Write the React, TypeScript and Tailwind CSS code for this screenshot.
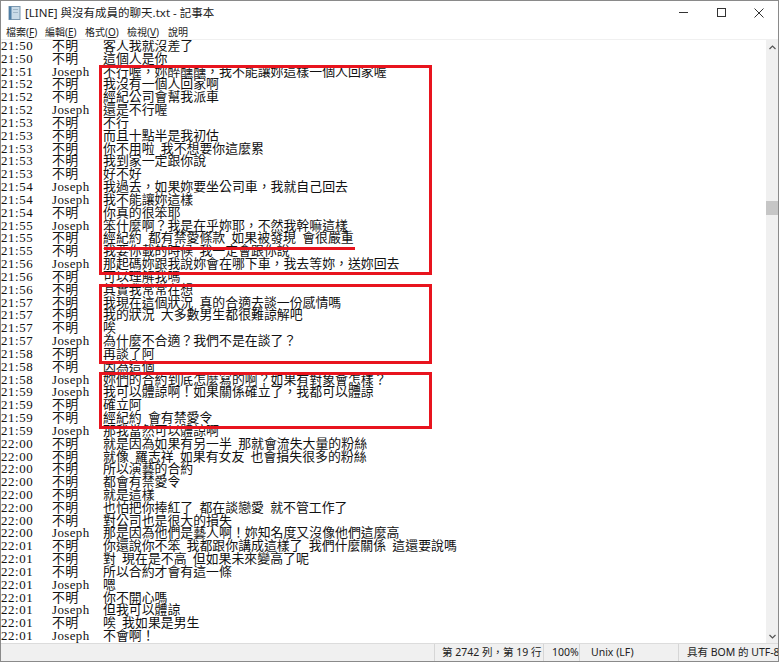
import React from 'react'

const rows: [string, string, string][] = [
  ['21:50', '不明', '客人我就沒差了'],
  ['21:50', '不明', '這個人是你'],
  ['21:51', 'Joseph', '不行喔，妳醉醺醺，我不能讓妳這樣一個人回家喔'],
  ['21:52', '不明', '我沒有一個人回家啊'],
  ['21:52', '不明', '經紀公司會幫我派車'],
  ['21:52', 'Joseph', '還是不行喔'],
  ['21:53', '不明', '不行'],
  ['21:53', '不明', '而且十點半是我初估'],
  ['21:53', '不明', '你不用啦 我不想要你這麼累'],
  ['21:53', '不明', '我到家一定跟你說'],
  ['21:53', '不明', '好不好'],
  ['21:54', 'Joseph', '我過去，如果妳要坐公司車，我就自己回去'],
  ['21:54', 'Joseph', '我不能讓妳這樣'],
  ['21:54', '不明', '你真的很笨耶'],
  ['21:55', 'Joseph', '笨什麼啊？我是在乎妳耶，不然我幹嘛這樣'],
  ['21:55', '不明', '經紀約 都有禁愛條款 如果被發現 會很嚴重'],
  ['21:55', '不明', '我要你載的時候 我一定會跟你說'],
  ['21:56', 'Joseph', '那起碼妳跟我說妳會在哪下車，我去等妳，送妳回去'],
  ['21:56', '不明', '可以理解我嗎'],
  ['21:56', '不明', '其實我常常在想'],
  ['21:57', '不明', '我現在這個狀況 真的合適去談一份感情嗎'],
  ['21:57', '不明', '我的狀況 大多數男生都很難諒解吧'],
  ['21:57', '不明', '唉'],
  ['21:57', 'Joseph', '為什麼不合適？我們不是在談了？'],
  ['21:58', '不明', '再談了阿'],
  ['21:58', '不明', '因為這個'],
  ['21:58', 'Joseph', '妳們的合約到底怎麼寫的啊？如果有對象會怎樣？'],
  ['21:59', 'Joseph', '我可以體諒啊！如果關係確立了，我都可以體諒'],
  ['21:59', '不明', '確立阿'],
  ['21:59', '不明', '經紀約 會有禁愛令'],
  ['21:59', 'Joseph', '那我當然可以體諒啊'],
  ['22:00', '不明', '就是因為如果有另一半 那就會流失大量的粉絲'],
  ['22:00', '不明', '就像 羅志祥 如果有女友 也會損失很多的粉絲'],
  ['22:00', '不明', '所以演藝的合約'],
  ['22:00', '不明', '都會有禁愛令'],
  ['22:00', '不明', '就是這樣'],
  ['22:00', '不明', '也怕把你捧紅了 都在談戀愛 就不管工作了'],
  ['22:00', '不明', '對公司也是很大的損失'],
  ['22:00', 'Joseph', '那是因為他們是藝人啊！妳知名度又沒像他們這麼高'],
  ['22:01', '不明', '你還說你不笨 我都跟你講成這樣了 我們什麼關係 這還要說嗎'],
  ['22:01', '不明', '對 現在是不高 但如果未來變高了呢'],
  ['22:01', '不明', '所以合約才會有這一條'],
  ['22:01', 'Joseph', '嗯'],
  ['22:01', '不明', '你不開心嗎'],
  ['22:01', 'Joseph', '但我可以體諒'],
  ['22:01', '不明', '唉 我如果是男生'],
  ['22:01', 'Joseph', '不會啊！'],
]

const uiFont = "font-['Noto_Sans','Noto_Sans_CJK_TC',sans-serif]"

const NotepadIcon = () => (
  <svg width="13" height="14" viewBox="0 0 13 14">
    <rect x="1" y="0.5" width="11" height="13" fill="#c9dbe8" stroke="#7b98b0" />
    <rect x="1" y="0.5" width="2.5" height="13" fill="#4f7fa6" />
    <rect x="5" y="3" width="5" height="1" fill="#9fb6c8" />
    <rect x="5" y="6" width="5" height="1" fill="#9fb6c8" />
  </svg>
)

const TitleBar = () => (
  <div className="flex h-[23px] items-center">
    <div className="flex items-center pl-[7px] gap-[4px]">
      <NotepadIcon />
      <span className={`${uiFont} text-[11.5px] text-[#222] leading-none`}>
        [LINE] 與沒有成員的聊天.txt - 記事本
      </span>
    </div>
    <div className="ml-auto flex h-full">
      <div className="flex w-[38px] items-center justify-center">
        <div className="h-px w-[9px] bg-[#333]" />
      </div>
      <div className="flex w-[38px] items-center justify-center">
        <div className="h-[9px] w-[9px] border border-[#333]" />
      </div>
      <div className="flex w-[38px] items-center justify-center">
        <svg width="10" height="10" viewBox="0 0 10 10">
          <path d="M0.5 0.5 L9.5 9.5 M9.5 0.5 L0.5 9.5" stroke="#333" strokeWidth="1" />
        </svg>
      </div>
    </div>
  </div>
)

const MenuBar = () => (
  <div className={`${uiFont} flex h-[16px] items-center pl-[5px] text-[10px] text-[#222] leading-none border-b border-[#f0f0f0] whitespace-nowrap`}>
    <span className="w-[39px]">檔案(<u>F</u>)</span>
    <span className="w-[40px]">編輯(<u>E</u>)</span>
    <span className="w-[42px]">格式(<u>O</u>)</span>
    <span className="w-[41px]">檢視(<u>V</u>)</span>
    <span>說明</span>
  </div>
)

const Scrollbar = () => (
  <div className="flex w-[12px] flex-col bg-[#f0f0f0]">
    <div className="flex h-[14px] items-center justify-center">
      <svg width="7" height="5" viewBox="0 0 7 5">
        <path d="M0.5 4 L3.5 1 L6.5 4" stroke="#555" fill="none" strokeWidth="1.2" />
      </svg>
    </div>
    <div className="h-[147px]" />
    <div className="h-[14px] bg-[#c6c6c6]" />
    <div className="flex-1" />
    <div className="flex h-[14px] items-center justify-center">
      <svg width="7" height="5" viewBox="0 0 7 5">
        <path d="M0.5 1 L3.5 4 L6.5 1" stroke="#555" fill="none" strokeWidth="1.2" />
      </svg>
    </div>
  </div>
)

const StatusBar = () => (
  <div className={`${uiFont} flex h-[18px] items-center bg-[#f0f0f0] border-t border-[#dcdcdc] text-[10.5px] text-[#222] leading-none`}>
    <div className="flex-1" />
    <div className="flex h-full w-[109px] items-center border-l border-[#d6d6d6] pl-[7px]">第 2742 列，第 19 行</div>
    <div className="flex h-full w-[36px] items-center border-l border-[#d6d6d6] pl-[8px]">100%</div>
    <div className="flex h-full w-[99px] items-center border-l border-[#d6d6d6] pl-[11px]">Unix (LF)</div>
    <div className="flex h-full w-[100px] items-center border-l border-[#d6d6d6] pl-[8px] overflow-hidden whitespace-nowrap">具有 BOM 的 UTF-8</div>
  </div>
)

export default function App() {
  return (
    <div className="flex h-[662px] w-[779px] flex-col overflow-hidden border border-[#8a8a8a] bg-white">
      <TitleBar />
      <MenuBar />
      <div className="flex min-h-0 flex-1">
        <div className="relative flex-1 overflow-hidden">
          <div className="font-['Liberation_Serif','Noto_Sans_CJK_TC',serif] text-[12.9px] leading-[12.83px] text-[#111]">
            {rows.map(([t, n, m], i) => (
              <div key={i} className="flex h-[12.83px] whitespace-nowrap">
                <span className="w-[51px] shrink-0 tracking-[0.6px]">{t}</span>
                <span className="w-[51px] shrink-0 tracking-[0.4px]">{n}</span>
                <span className="[word-spacing:3px]">{m}</span>
              </div>
            ))}
          </div>
          {/* red annotations */}
          <div className="absolute left-[98px] top-[25px] h-[210px] w-[333px] border-[3px] border-[#e8141e]" />
          <div className="absolute left-[103px] top-[207px] h-[3px] w-[251px] bg-[#e8141e]" />
          <div className="absolute left-[98px] top-[244px] h-[80px] w-[333px] border-[3px] border-[#e8141e]" />
          <div className="absolute left-[98px] top-[332px] h-[57px] w-[333px] border-[3px] border-[#e8141e]" />
        </div>
        <Scrollbar />
      </div>
      <StatusBar />
    </div>
  )
}
